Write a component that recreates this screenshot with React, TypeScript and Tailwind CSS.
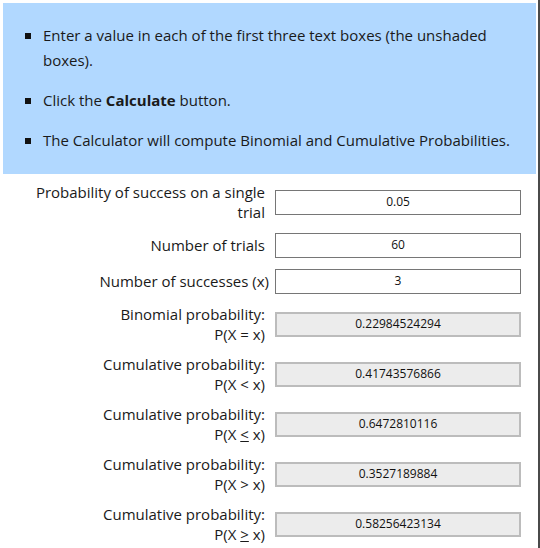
import React from "react";

const font = { fontFamily: '"Open Sans", "Noto Sans", Arial, sans-serif' };

function Bullet({ children }: { children: React.ReactNode }) {
  return (
    <li className="flex">
      <span className="w-[40px] shrink-0 flex justify-start pl-[22px] pt-[10px]">
        <span className="block w-[6px] h-[6px] bg-[#111]" />
      </span>
      <span className="flex-1">{children}</span>
    </li>
  );
}

function Label({ l1, l2 }: { l1: React.ReactNode; l2?: React.ReactNode }) {
  return (
    <div className="text-right text-[15px] leading-[20px] text-[#1a1a1a] flex flex-col justify-center">
      <span>{l1}</span>
      {l2 && <span>{l2}</span>}
    </div>
  );
}

function Input({ v }: { v: string }) {
  return (
    <div className="self-center h-[25px] border border-[#767676] bg-white flex items-center justify-center text-[12px] text-[#111]">
      {v}
    </div>
  );
}

function Output({ v }: { v: string }) {
  return (
    <div className="self-center h-[25px] border-2 border-[#bcbcbc] bg-[#ececec] flex items-center justify-center text-[12px] text-[#111]">
      {v}
    </div>
  );
}

export default function App() {
  return (
    <div className="relative w-[540px] h-[548px] bg-white overflow-hidden" style={font}>
      <div className="absolute right-0 top-0 h-full w-[2px] bg-[#4a4a4a]" />
      <div className="ml-[3px] mt-[3px] w-[533px] bg-[#b1d8ff] pt-[20px] pb-[21px] pr-[10px]">
        <ul className="flex flex-col gap-[15px] text-[15px] leading-[25px] text-[#1a1a1a]">
          <Bullet>Enter a value in each of the first three text boxes (the unshaded boxes).</Bullet>
          <Bullet>
            Click the <b>Calculate</b> button.
          </Bullet>
          <Bullet>The Calculator will compute Binomial and Cumulative Probabilities.</Bullet>
        </ul>
      </div>
      <div className="mt-[8px] grid grid-cols-[265px_246px] gap-x-[10px] gap-y-[10px]">
        <Label l1="Probability of success on a single" l2="trial" />
        <Input v="0.05" />
        <div className="h-[26px] flex items-center justify-end text-[15px] text-[#1a1a1a]">Number of trials</div>
        <Input v="60" />
        <div className="h-[26px] flex items-center justify-end text-[15px] text-[#1a1a1a] -mr-[4px]">Number of successes (x)</div>
        <Input v="3" />
        <Label l1="Binomial probability:" l2={<>P(X&nbsp;=&nbsp;x)</>} />
        <Output v="0.22984524294" />
        <Label l1="Cumulative probability:" l2={<>P(X&nbsp;&lt;&nbsp;x)</>} />
        <Output v="0.41743576866" />
        <Label l1="Cumulative probability:" l2={<>P(X&nbsp;<u>&lt;</u>&nbsp;x)</>} />
        <Output v="0.6472810116" />
        <Label l1="Cumulative probability:" l2={<>P(X&nbsp;&gt;&nbsp;x)</>} />
        <Output v="0.3527189884" />
        <Label l1="Cumulative probability:" l2={<>P(X&nbsp;<u>&gt;</u>&nbsp;x)</>} />
        <Output v="0.58256423134" />
      </div>
    </div>
  );
}
